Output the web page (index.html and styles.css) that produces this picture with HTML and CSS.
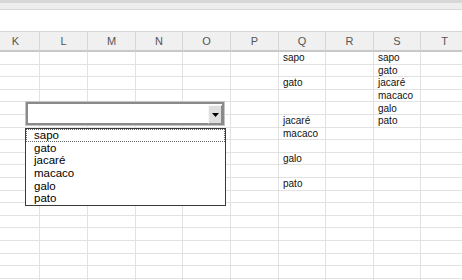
FILE: index.html
```html
<!DOCTYPE html>
<html lang="pt">
<head>
    <meta charset="UTF-8">
    <title>Lista suspensa</title>
    <link rel="stylesheet" href="styles.css">
</head>
<body>
    <div class="ribbon"></div>
    <div class="formula-bar"></div>

    <div class="sheet">
        <table class="grid">
            <colgroup>
                <col class="w48"><col class="w48"><col class="w48"><col class="w47"><col class="w48">
                <col class="w48"><col class="w47"><col class="w48"><col class="w47"><col class="w48">
            </colgroup>
            <thead>
                <tr>
                    <th>K</th><th>L</th><th>M</th><th>N</th><th>O</th>
                    <th>P</th><th>Q</th><th>R</th><th>S</th><th>T</th>
                </tr>
            </thead>
            <tbody>
                <tr><td></td><td></td><td></td><td></td><td></td><td></td><td>sapo</td><td></td><td>sapo</td><td></td></tr>
                <tr><td></td><td></td><td></td><td></td><td></td><td></td><td></td><td></td><td>gato</td><td></td></tr>
                <tr><td></td><td></td><td></td><td></td><td></td><td></td><td>gato</td><td></td><td>jacaré</td><td></td></tr>
                <tr><td></td><td></td><td></td><td></td><td></td><td></td><td></td><td></td><td>macaco</td><td></td></tr>
                <tr><td></td><td></td><td></td><td></td><td></td><td></td><td></td><td></td><td>galo</td><td></td></tr>
                <tr><td></td><td></td><td></td><td></td><td></td><td></td><td>jacaré</td><td></td><td>pato</td><td></td></tr>
                <tr><td></td><td></td><td></td><td></td><td></td><td></td><td>macaco</td><td></td><td></td><td></td></tr>
                <tr><td></td><td></td><td></td><td></td><td></td><td></td><td></td><td></td><td></td><td></td></tr>
                <tr><td></td><td></td><td></td><td></td><td></td><td></td><td>galo</td><td></td><td></td><td></td></tr>
                <tr><td></td><td></td><td></td><td></td><td></td><td></td><td></td><td></td><td></td><td></td></tr>
                <tr><td></td><td></td><td></td><td></td><td></td><td></td><td>pato</td><td></td><td></td><td></td></tr>
                <tr><td></td><td></td><td></td><td></td><td></td><td></td><td></td><td></td><td></td><td></td></tr>
                <tr><td></td><td></td><td></td><td></td><td></td><td></td><td></td><td></td><td></td><td></td></tr>
                <tr><td></td><td></td><td></td><td></td><td></td><td></td><td></td><td></td><td></td><td></td></tr>
                <tr><td></td><td></td><td></td><td></td><td></td><td></td><td></td><td></td><td></td><td></td></tr>
                <tr><td></td><td></td><td></td><td></td><td></td><td></td><td></td><td></td><td></td><td></td></tr>
                <tr><td></td><td></td><td></td><td></td><td></td><td></td><td></td><td></td><td></td><td></td></tr>
                <tr><td></td><td></td><td></td><td></td><td></td><td></td><td></td><td></td><td></td><td></td></tr>
                <tr><td></td><td></td><td></td><td></td><td></td><td></td><td></td><td></td><td></td><td></td></tr>
            </tbody>
        </table>

        <!-- combo box control drawn over the cells -->
        <div class="combo">
            <span class="combo-button">
                <svg width="7" height="4" viewBox="0 0 7 4"><polygon points="0,0 7,0 3.5,4" fill="#000"/></svg>
            </span>
        </div>

        <ul class="listbox">
            <li class="focused">sapo</li>
            <li>gato</li>
            <li>jacaré</li>
            <li>macaco</li>
            <li>galo</li>
            <li>pato</li>
        </ul>
    </div>
</body>
</html>
```

FILE: styles.css
```css
:root {
    --gridline: #e2e2e2;
    --header-bg: #f0f0f0;
    --header-line: #d6d6d6;
    --text: #111;
}

html, body {
    margin: 0;
    overflow: hidden;
    background: white;
    font-family: 'Liberation Sans', Arial, sans-serif;
    color: var(--text);
}

.ribbon {
    height: 3px;
    background: #d8d8d8;
    border-bottom: 6px solid #eeeeee;
}

.formula-bar {
    height: 21px;
    border-top: 1px solid #d8d8d8;
    border-bottom: 1px solid var(--header-line);
    background: white;
}

.sheet {
    position: relative;
}

.grid {
    margin-left: -8px;
    width: 477px;
    table-layout: fixed;
    border-collapse: separate;
    border-spacing: 0;
}

.w48 { width: 48px; }
.w47 { width: 47px; }

.grid th {
    height: 20px;
    padding: 0;
    background: var(--header-bg);
    border-right: 1px solid var(--header-line);
    border-bottom: 2px solid #c8c8c8;
    color: #555;
    font-size: 11px;
    font-weight: normal;
    text-align: center;
    box-sizing: border-box;
}

.grid tbody tr {
    height: 12.6px;
}

.grid td {
    padding: 1px 0 0 4px;
    border-right: 1px solid var(--gridline);
    border-bottom: 1px solid var(--gridline);
    font-size: 10px;
    line-height: 10px;
    white-space: nowrap;
    overflow: hidden;
    vertical-align: middle;
}

.combo {
    position: absolute;
    left: 26px;
    top: 70px;
    width: 198px;
    height: 23px;
    box-sizing: border-box;
    border: 2px solid #8a8a8a;
    outline: 1px solid #c4c4c4;
    background: white;
}

.combo-button {
    position: absolute;
    right: 0;
    top: 1px;
    width: 14px;
    height: 19px;
    box-sizing: border-box;
    display: flex;
    align-items: center;
    justify-content: center;
    background: #dedede;
    border: 1px solid;
    border-color: #f8f8f8 #8a8a8a #8a8a8a #f8f8f8;
}

.listbox {
    position: absolute;
    left: 25px;
    top: 96px;
    width: 201px;
    margin: 0;
    padding: 0;
    list-style: none;
    box-sizing: border-box;
    border: 1px solid #3a3a3a;
    background: white;
    font-size: 11.5px;
}

.listbox li {
    height: 12.7px;
    line-height: 12.7px;
    padding-left: 8px;
    color: #000;
}

.listbox li.focused {
    outline: 1px dotted #666;
    outline-offset: -1px;
}
```
